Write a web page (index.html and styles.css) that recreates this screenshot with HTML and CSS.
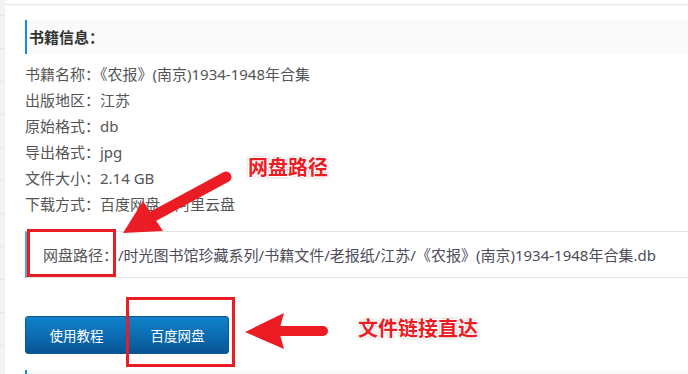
FILE: index.html
```html
<!DOCTYPE html>
<html lang="zh-CN">
<head>
    <meta charset="UTF-8">
    <meta name="viewport" content="width=device-width, initial-scale=1.0">
    <title>书籍信息</title>
    <link rel="stylesheet" href="styles.css">
</head>
<body>
    <div class="page">
        <div class="side"></div>
        <div class="main">
            <h3 class="block-title">书籍信息：</h3>
            <ul class="info">
                <li>书籍名称：《农报》(南京)1934-1948年合集</li>
                <li>出版地区：江苏</li>
                <li>原始格式：db</li>
                <li>导出格式：jpg</li>
                <li>文件大小：2.14 GB</li>
                <li>下载方式：百度网盘、阿里云盘</li>
            </ul>
            <div class="path">
                <span class="path-label">网盘路径：</span><span class="path-value">/时光图书馆珍藏系列/书籍文件/老报纸/江苏/《农报》(南京)1934-1948年合集.db</span>
            </div>
            <div class="btn-group">
                <button class="btn">使用教程</button>
                <button class="btn">百度网盘</button>
            </div>
            <h3 class="block-title"></h3>
        </div>
    </div>

    <!-- annotations drawn over the screenshot -->
    <svg class="marks" width="688" height="374" viewBox="0 0 688 374">
        <line x1="226" y1="177" x2="150" y2="218" stroke="#ec1c24" stroke-width="11" stroke-linecap="round"/>
        <polygon points="123,233 163,231 143,201" fill="#ec1c24"/>
        <line x1="278" y1="331" x2="323" y2="331" stroke="#ec1c24" stroke-width="10" stroke-linecap="round"/>
        <polygon points="245,332 284,313 279,331 284,349" fill="#ec1c24"/>
        <rect x="28.5" y="230.5" width="86" height="45" fill="none" stroke="#ec1c24" stroke-width="3"/>
        <rect x="127.5" y="298.5" width="106" height="67" fill="none" stroke="#ec1c24" stroke-width="3"/>
    </svg>
    <div class="note note-path">网盘路径</div>
    <div class="note note-link">文件链接直达</div>
</body>
</html>
```

FILE: styles.css
```css
* {
    box-sizing: border-box;
    margin: 0;
    padding: 0;
}

body {
    font-family: "Noto Sans", "Noto Sans CJK SC", sans-serif;
    background-color: #fff;
    color: #555;
    width: 688px;
    height: 374px;
    overflow: hidden;
    position: relative;
}

.page {
    display: flex;
    height: 374px;
    overflow: hidden;
}

.side {
    width: 5px;
    flex-shrink: 0;
    background-color: #f3f3f3;
    background-image: repeating-linear-gradient(to bottom, #f3f3f3 0, #f3f3f3 15px, #e6e6e6 15px, #e6e6e6 16px, #f3f3f3 16px, #f3f3f3 33px);
}

.main {
    flex: 1;
    margin-top: 4px;
    border-top: 1px solid #e6e6e6;
    padding: 15px 0 0 20px;
}

.block-title {
    height: 34px;
    line-height: 34px;
    background-color: #fafafa;
    border-left: 2px solid #0f8ef0;
    padding-left: 2px;
    font-size: 15px;
    font-weight: bold;
    color: #333;
}

.info {
    list-style: none;
    margin: 7px 0 14px;
}

.info li {
    font-size: 15px;
    line-height: 26px;
    white-space: nowrap;
}

.path {
    height: 47px;
    display: flex;
    align-items: center;
    border-top: 1px solid #e3e3e3;
    border-bottom: 1px solid #e3e3e3;
    border-left: 3px solid #58a6c3;
    padding-left: 15px;
    font-size: 15px;
    white-space: nowrap;
}

.path-value {
    color: #4c4c58;
}

.btn-group {
    display: flex;
    margin: 38px 0 16px;
    height: 38px;
    width: 204px;
    border: 1px solid #0a5792;
    border-radius: 3px;
    overflow: hidden;
    background: linear-gradient(to bottom, #0f82cb, #0b68ad 60%, #075595);
}

.btn {
    flex: 1;
    border: none;
    background: transparent;
    color: #fff;
    font-family: "Noto Sans", "Noto Sans CJK SC", sans-serif;
    font-size: 13.5px;
    cursor: pointer;
}

.marks {
    position: absolute;
    left: 0;
    top: 0;
}

.note {
    position: absolute;
    font-size: 20px;
    line-height: 21px;
    font-weight: bold;
    color: #ec1c24;
    white-space: nowrap;
    text-shadow: 1px 0 0 #fff, -1px 0 0 #fff, 0 1px 0 #fff, 0 -1px 0 #fff,
                 1px 1px 0 #fff, -1px -1px 0 #fff, 1px -1px 0 #fff, -1px 1px 0 #fff,
                 0 0 3px #aaa, 0 0 4px #bbb;
}

.note-path {
    left: 248px;
    top: 157px;
}

.note-link {
    left: 358px;
    top: 318px;
}
```
